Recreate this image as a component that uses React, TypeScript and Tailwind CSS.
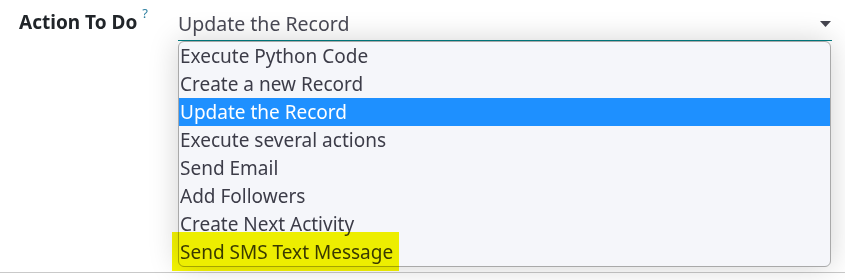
/**
 * Server action form field with an open native-style select list.
 */

const OPTIONS = [
  'Execute Python Code',
  'Create a new Record',
  'Update the Record',
  'Execute several actions',
  'Send Email',
  'Add Followers',
  'Create Next Activity',
  'Send SMS Text Message',
]

const SELECTED = 'Update the Record'

export default function App() {
  return (
    <div className="h-[280px] w-[845px] bg-white font-['Noto_Sans',sans-serif] overflow-hidden">
      <div className="relative h-[273px] border-b border-[#c9c9c9]">
        {/* Field row */}
        <div className="flex pt-[9px]">
          <div className="w-[178px] pl-[19px] flex items-start">
            <span className="text-[19px] font-bold text-[#212529] leading-[26px]">Action To Do</span>
            <sup className="ml-[5px] mt-[4px] text-[13px] text-[#2d7fa0] leading-none">?</sup>
          </div>

          <div className="relative w-[654px]">
            <div className="flex items-center justify-between h-[32px] border-b border-[#017e84] pb-[1px]">
              <span className="text-[19.5px] text-[#4a4a55] leading-[28px]">{SELECTED}</span>
              <CaretIcon className="mr-[1px] h-[6px] w-[11px] text-[#45454f]" />
            </div>

            {/* Open list */}
            <ul className="absolute left-0 top-[32px] w-[653px] bg-[#f5f6fa] border border-[#a9a9a9] rounded-md shadow-[0_0_30px_rgba(0,0,0,0.18)] overflow-hidden">
              {OPTIONS.map((opt) => (
                <li
                  key={opt}
                  className={`h-[28px] pl-[1px] text-[19px] leading-[28px] ${
                    opt === SELECTED ? 'bg-[#1e90ff] text-white' : 'text-[#3c3c48]'
                  }`}
                >
                  {opt}
                </li>
              ))}
            </ul>

            {/* Marker highlight */}
            <div className="absolute left-[-6px] top-[223px] h-[39px] w-[227px] bg-[#f7f700] mix-blend-multiply" />
          </div>
        </div>
      </div>
    </div>
  )
}

const CaretIcon = ({ className }: { className?: string }) => (
  <svg className={className} viewBox="0 0 11 6" fill="currentColor">
    <path d="M0 0h11L5.5 6z" />
  </svg>
)
